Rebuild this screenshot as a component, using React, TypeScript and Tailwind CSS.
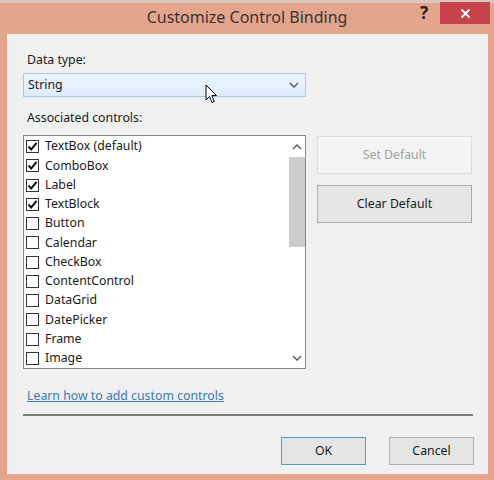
import React from 'react';

const controls = [
  { name: 'TextBox (default)', checked: true },
  { name: 'ComboBox', checked: true },
  { name: 'Label', checked: true },
  { name: 'TextBlock', checked: true },
  { name: 'Button', checked: false },
  { name: 'Calendar', checked: false },
  { name: 'CheckBox', checked: false },
  { name: 'ContentControl', checked: false },
  { name: 'DataGrid', checked: false },
  { name: 'DatePicker', checked: false },
  { name: 'Frame', checked: false },
  { name: 'Image', checked: false },
];

const font = { fontFamily: '"Noto Sans", "Open Sans", sans-serif' };

const CheckBox: React.FC<{ checked: boolean }> = ({ checked }) => (
  <div className="w-[13px] h-[13px] border border-[#333] bg-white flex items-center justify-center shrink-0">
    {checked && (
      <svg width="11" height="11" viewBox="0 0 11 11">
        <path d="M1.5 5.5 L4.2 8.4 L9.6 1.8" fill="none" stroke="#111" strokeWidth="2" />
      </svg>
    )}
  </div>
);

const Chevron: React.FC<{ up?: boolean }> = ({ up }) => (
  <svg width="10" height="6" viewBox="0 0 10 6">
    <path d={up ? 'M1 5 L5 1 L9 5' : 'M1 1 L5 5 L9 1'} fill="none" stroke="#555" strokeWidth="1.4" />
  </svg>
);

const App: React.FC = () => {
  return (
    <div className="w-[494px] h-[480px] bg-[#e4a58f] flex flex-col text-[#1a1a1a]" style={font}>
      {/* Title bar */}
      <div className="relative h-[34px] shrink-0">
        <div className="h-[3px] bg-[#d9c7bd]"></div>
        <div className="text-center text-[16px] leading-[28px] text-[#3a3330]">Customize Control Binding</div>
        <div className="absolute right-[4px] top-[2px] flex items-center">
          <span className="text-[17px] font-bold text-[#222] mr-[12px] leading-[22px]">?</span>
          <div className="w-[50px] h-[22px] bg-[#c7434c] flex items-center justify-center">
            <svg width="11" height="11" viewBox="0 0 11 11">
              <path d="M1.5 1.5 L9.5 9.5 M9.5 1.5 L1.5 9.5" stroke="#fff" strokeWidth="1.8" />
            </svg>
          </div>
        </div>
      </div>

      {/* Client area */}
      <div className="mx-[7px] w-[481px] h-[440px] bg-[#f0f0f0] relative pl-[16px] flex flex-col text-[12.3px]">
        <div className="mt-[17px] pl-[4px] leading-[18px]">Data type:</div>
        <div className="mt-[4px] w-[283px] h-[24px] border border-[#a6c8ec] bg-[linear-gradient(#ecf4fc,#dcecfc)] flex items-center justify-between pl-[4px] pr-[6px]">
          <span className="pt-[1px]">String</span>
          <Chevron />
        </div>

        <div className="mt-[12px] pl-[4px] leading-[18px]">Associated controls:</div>

        <div className="mt-[8px] flex gap-[11px]">
          <div className="w-[283px] h-[234px] border border-[#828790] bg-white flex">
            <div className="flex-1 pt-[1px]">
              {controls.map((c) => (
                <div key={c.name} className="h-[19.25px] flex items-center gap-[6px] pl-[2px]">
                  <CheckBox checked={c.checked} />
                  <span>{c.name}</span>
                </div>
              ))}
            </div>
            <div className="w-[17px] flex flex-col items-center">
              <div className="h-[21px] flex items-center justify-center">
                <Chevron up />
              </div>
              <div className="w-[16px] h-[90px] bg-[#cdcdcd]"></div>
              <div className="flex-1"></div>
              <div className="h-[21px] flex items-center justify-center">
                <Chevron />
              </div>
            </div>
          </div>

          <div className="flex flex-col gap-[11px] pt-[1px]">
            <div className="w-[155px] h-[38px] border border-[#dcdcdc] bg-[#f4f4f4] flex items-center justify-center text-[#a2a2a2]">
              Set Default
            </div>
            <div className="w-[155px] h-[38px] border border-[#adadad] bg-[#e6e6e6] flex items-center justify-center">
              Clear Default
            </div>
          </div>
        </div>

        <div className="mt-[18px] pl-[4px] leading-[18px] text-[#3b79b7] underline">Learn how to add custom controls</div>
        <div className="mt-[9px] w-[450px] h-[2px] bg-[#808080]"></div>

        <div className="mt-[21px] flex justify-end gap-[23px] pr-[14px]">
          <div className="w-[85px] h-[28px] border border-[#4e9ad8] bg-[#e5e5e5] flex items-center justify-center">OK</div>
          <div className="w-[85px] h-[28px] border border-[#adadad] bg-[#e5e5e5] flex items-center justify-center">Cancel</div>
        </div>

        {/* Mouse cursor */}
        <svg className="absolute left-[198px] top-[50px]" width="13" height="20" viewBox="0 0 13 20">
          <path d="M1 1 L1 16 L4.5 12.5 L7 18.5 L9.3 17.5 L6.8 11.6 L11.5 11.6 Z" fill="#fff" stroke="#000" strokeWidth="1" />
        </svg>
      </div>
    </div>
  );
};

export default App;
